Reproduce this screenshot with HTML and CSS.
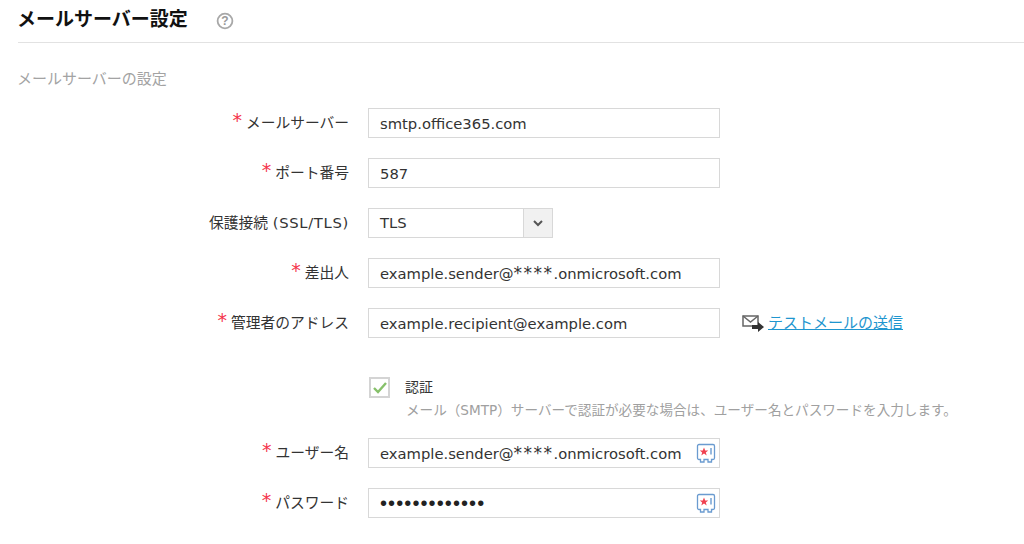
FILE: index.html
```html
<!DOCTYPE html>
<html lang="ja">
<head>
<meta charset="utf-8">
<title>メールサーバー設定</title>
<link rel="stylesheet" href="styles.css">
</head>
<body>
<header class="page-head">
  <h1 class="page-title">メールサーバー設定</h1>
  <svg class="help" width="18" height="18" viewBox="0 0 18 18"><circle cx="9" cy="9" r="7.4" fill="none" stroke="#a8a8a8" stroke-width="1.800"/><text x="9" y="13" text-anchor="middle" class="help-q">?</text></svg>
</header>
<h2 class="section">メールサーバーの設定</h2>
<form class="form">
  <div class="row"><label class="label"><span class="req">*</span>メールサーバー</label><div class="input">smtp.office365.com</div></div>
  <div class="row"><label class="label"><span class="req">*</span>ポート番号</label><div class="input">587</div></div>
  <div class="row"><label class="label">保護接続 <span class="latin">(SSL/TLS)</span></label>
    <div class="select"><span class="select-value">TLS</span><span class="select-btn"><svg width="10" height="7" viewBox="0 0 10 7"><path d="M1 1l4 4 4-4" fill="none" stroke="#555" stroke-width="2"/></svg></span></div>
  </div>
  <div class="row"><label class="label"><span class="req">*</span>差出人</label><div class="input">example.sender@<span class="mask">****</span>.onmicrosoft.com</div></div>
  <div class="row"><label class="label"><span class="req">*</span>管理者のアドレス</label><div class="input">example.recipient@example.com</div>
    <svg class="mail" width="23" height="18" viewBox="0 0 23 18"><path d="M1 2h15v10H1z" fill="none" stroke="#666" stroke-width="1.500"/><path d="M1 2l7.500 6L16 2" fill="none" stroke="#666" stroke-width="1.500"/><path d="M10 11h6V8l6 5-6 5v-3h-6z" fill="#333"/></svg>
    <a class="link" href="#">テストメールの送信</a>
  </div>
  <div class="auth">
    <span class="check"><svg width="16" height="14" viewBox="0 0 16 14"><path d="M2 7l4 4 8-9" fill="none" stroke="#86c06a" stroke-width="2.400"/></svg></span>
    <div>
      <div class="auth-title">認証</div>
      <div class="auth-note">メール（SMTP）サーバーで認証が必要な場合は、ユーザー名とパスワードを入力します。</div>
    </div>
  </div>
  <div class="row"><label class="label"><span class="req">*</span>ユーザー名</label><div class="input">example.sender@<span class="mask">****</span>.onmicrosoft.com
    <svg class="vault" width="20" height="21" viewBox="0 0 20 21"><path d="M3 1.500h14A1.500 1.500 0 0 1 18.500 3v12a1.500 1.500 0 0 1-1.500 1.500h-1.500V19h-3.500v-2.500H8V19H4.500v-2.500H3A1.500 1.500 0 0 1 1.500 15V3A1.500 1.500 0 0 1 3 1.500z" fill="#fff" stroke="#6a9bd0" stroke-width="1.300"/><path d="M8 4.500l1.200 3h3l-2.400 1.900.9 3L8 10.600l-2.700 1.800.9-3-2.400-1.900h3z" fill="#f0404f"/><path d="M15 5v6.500" stroke="#6a9bd0" stroke-width="1.400"/></svg>
  </div></div>
  <div class="row"><label class="label"><span class="req">*</span>パスワード</label><div class="input"><span class="dots">•••••••••••••</span>
    <svg class="vault" width="20" height="21" viewBox="0 0 20 21"><path d="M3 1.500h14A1.500 1.500 0 0 1 18.500 3v12a1.500 1.500 0 0 1-1.500 1.500h-1.500V19h-3.500v-2.500H8V19H4.500v-2.500H3A1.500 1.500 0 0 1 1.500 15V3A1.500 1.500 0 0 1 3 1.500z" fill="#fff" stroke="#6a9bd0" stroke-width="1.300"/><path d="M8 4.500l1.200 3h3l-2.400 1.900.9 3L8 10.600l-2.700 1.800.9-3-2.400-1.900h3z" fill="#f0404f"/><path d="M15 5v6.500" stroke="#6a9bd0" stroke-width="1.400"/></svg>
  </div></div>
</form>
</body>
</html>
```
FILE: styles.css
```css
* { box-sizing: border-box; }
html, body { margin: 0; padding: 0; background: #fff; overflow: hidden; }
body {
  width: 1024px;
  height: 544px;
  font-family: "DejaVu Sans", "Noto Sans CJK JP", sans-serif;
  font-size: 14px;
  color: #333;
}
.page-head {
  height: 43px;
  margin-left: 18px;
  border-bottom: 1px solid #e2e2e2;
  display: flex;
  align-items: flex-start;
  padding-top: 6px;
}
.page-title {
  margin: 0 0 0 -1px;
  font-family: "Noto Sans CJK JP", sans-serif;
  font-size: 19px;
  line-height: 24px;
  font-weight: 700;
  color: #111;
}
.help { margin: 6px 0 0 28px; }
.help-q { font-family: "Liberation Sans", sans-serif; font-size: 12px; font-weight: 700; fill: #999; }
.section {
  margin: 24px 0 0 17px;
  font-family: "Noto Sans CJK JP", sans-serif;
  font-size: 15px;
  line-height: 22px;
  font-weight: 400;
  color: #a3a3a3;
}
.form { margin-top: 19px; display: flex; flex-direction: column; gap: 20px; }
.row { display: flex; align-items: center; height: 30px; }
.label {
  width: 349px;
  text-align: right;
  font-size: 14.750px;
  line-height: 30px;
  height: 30px;
  color: #333;
  white-space: nowrap;
}
.latin { letter-spacing: 0.700px; }
.req { color: #f4364c; font-size: 19px; line-height: 14px; margin-right: 4px; position: relative; top: -1px; }
.input {
  position: relative;
  width: 352px;
  height: 30px;
  margin-left: 19px;
  border: 1px solid #d8d8d8;
  padding-left: 11px;
  line-height: 30px;
  font-size: 14.750px;
  color: #333;
  white-space: nowrap;
}
.mask { font-size: 17px; letter-spacing: 1.500px; line-height: 0; }
.dots { font-family: "Liberation Sans", sans-serif; font-size: 20px; letter-spacing: 1.100px; line-height: 0; color: #222; position: relative; top: 1px; }
.vault { position: absolute; right: 3px; top: 4px; }
.select {
  width: 185px;
  height: 30px;
  margin-left: 19px;
  border: 1px solid #d8d8d8;
  display: flex;
  align-items: stretch;
  font-size: 14.750px;
  line-height: 28px;
}
.select-value { flex: 1; padding-left: 11px; }
.select-btn {
  width: 29px;
  background: #f1f1f1;
  border-left: 1px solid #d8d8d8;
  display: flex;
  align-items: center;
  justify-content: center;
}
.mail { margin-left: 22px; }
.link {
  margin-left: 3px;
  font-family: "Noto Sans CJK JP", sans-serif;
  font-size: 15px;
  color: #1f96cf;
  text-decoration: underline;
  position: relative;
  top: -2px;
}
.auth { display: flex; margin: 19px 0 0 369px; gap: 15px; align-items: flex-start; height: 41px; }
.check {
  width: 21px;
  height: 21px;
  flex: none;
  border: 2px solid #d4d4d4;
  display: flex;
  align-items: center;
  justify-content: center;
}
.auth-title { font-family: "Noto Sans CJK JP", sans-serif; font-size: 14px; line-height: 18px; color: #333; }
.auth-note { font-size: 13.600px; line-height: 30px; padding-left: 1px; color: #a0a0a0; white-space: nowrap; }
```
